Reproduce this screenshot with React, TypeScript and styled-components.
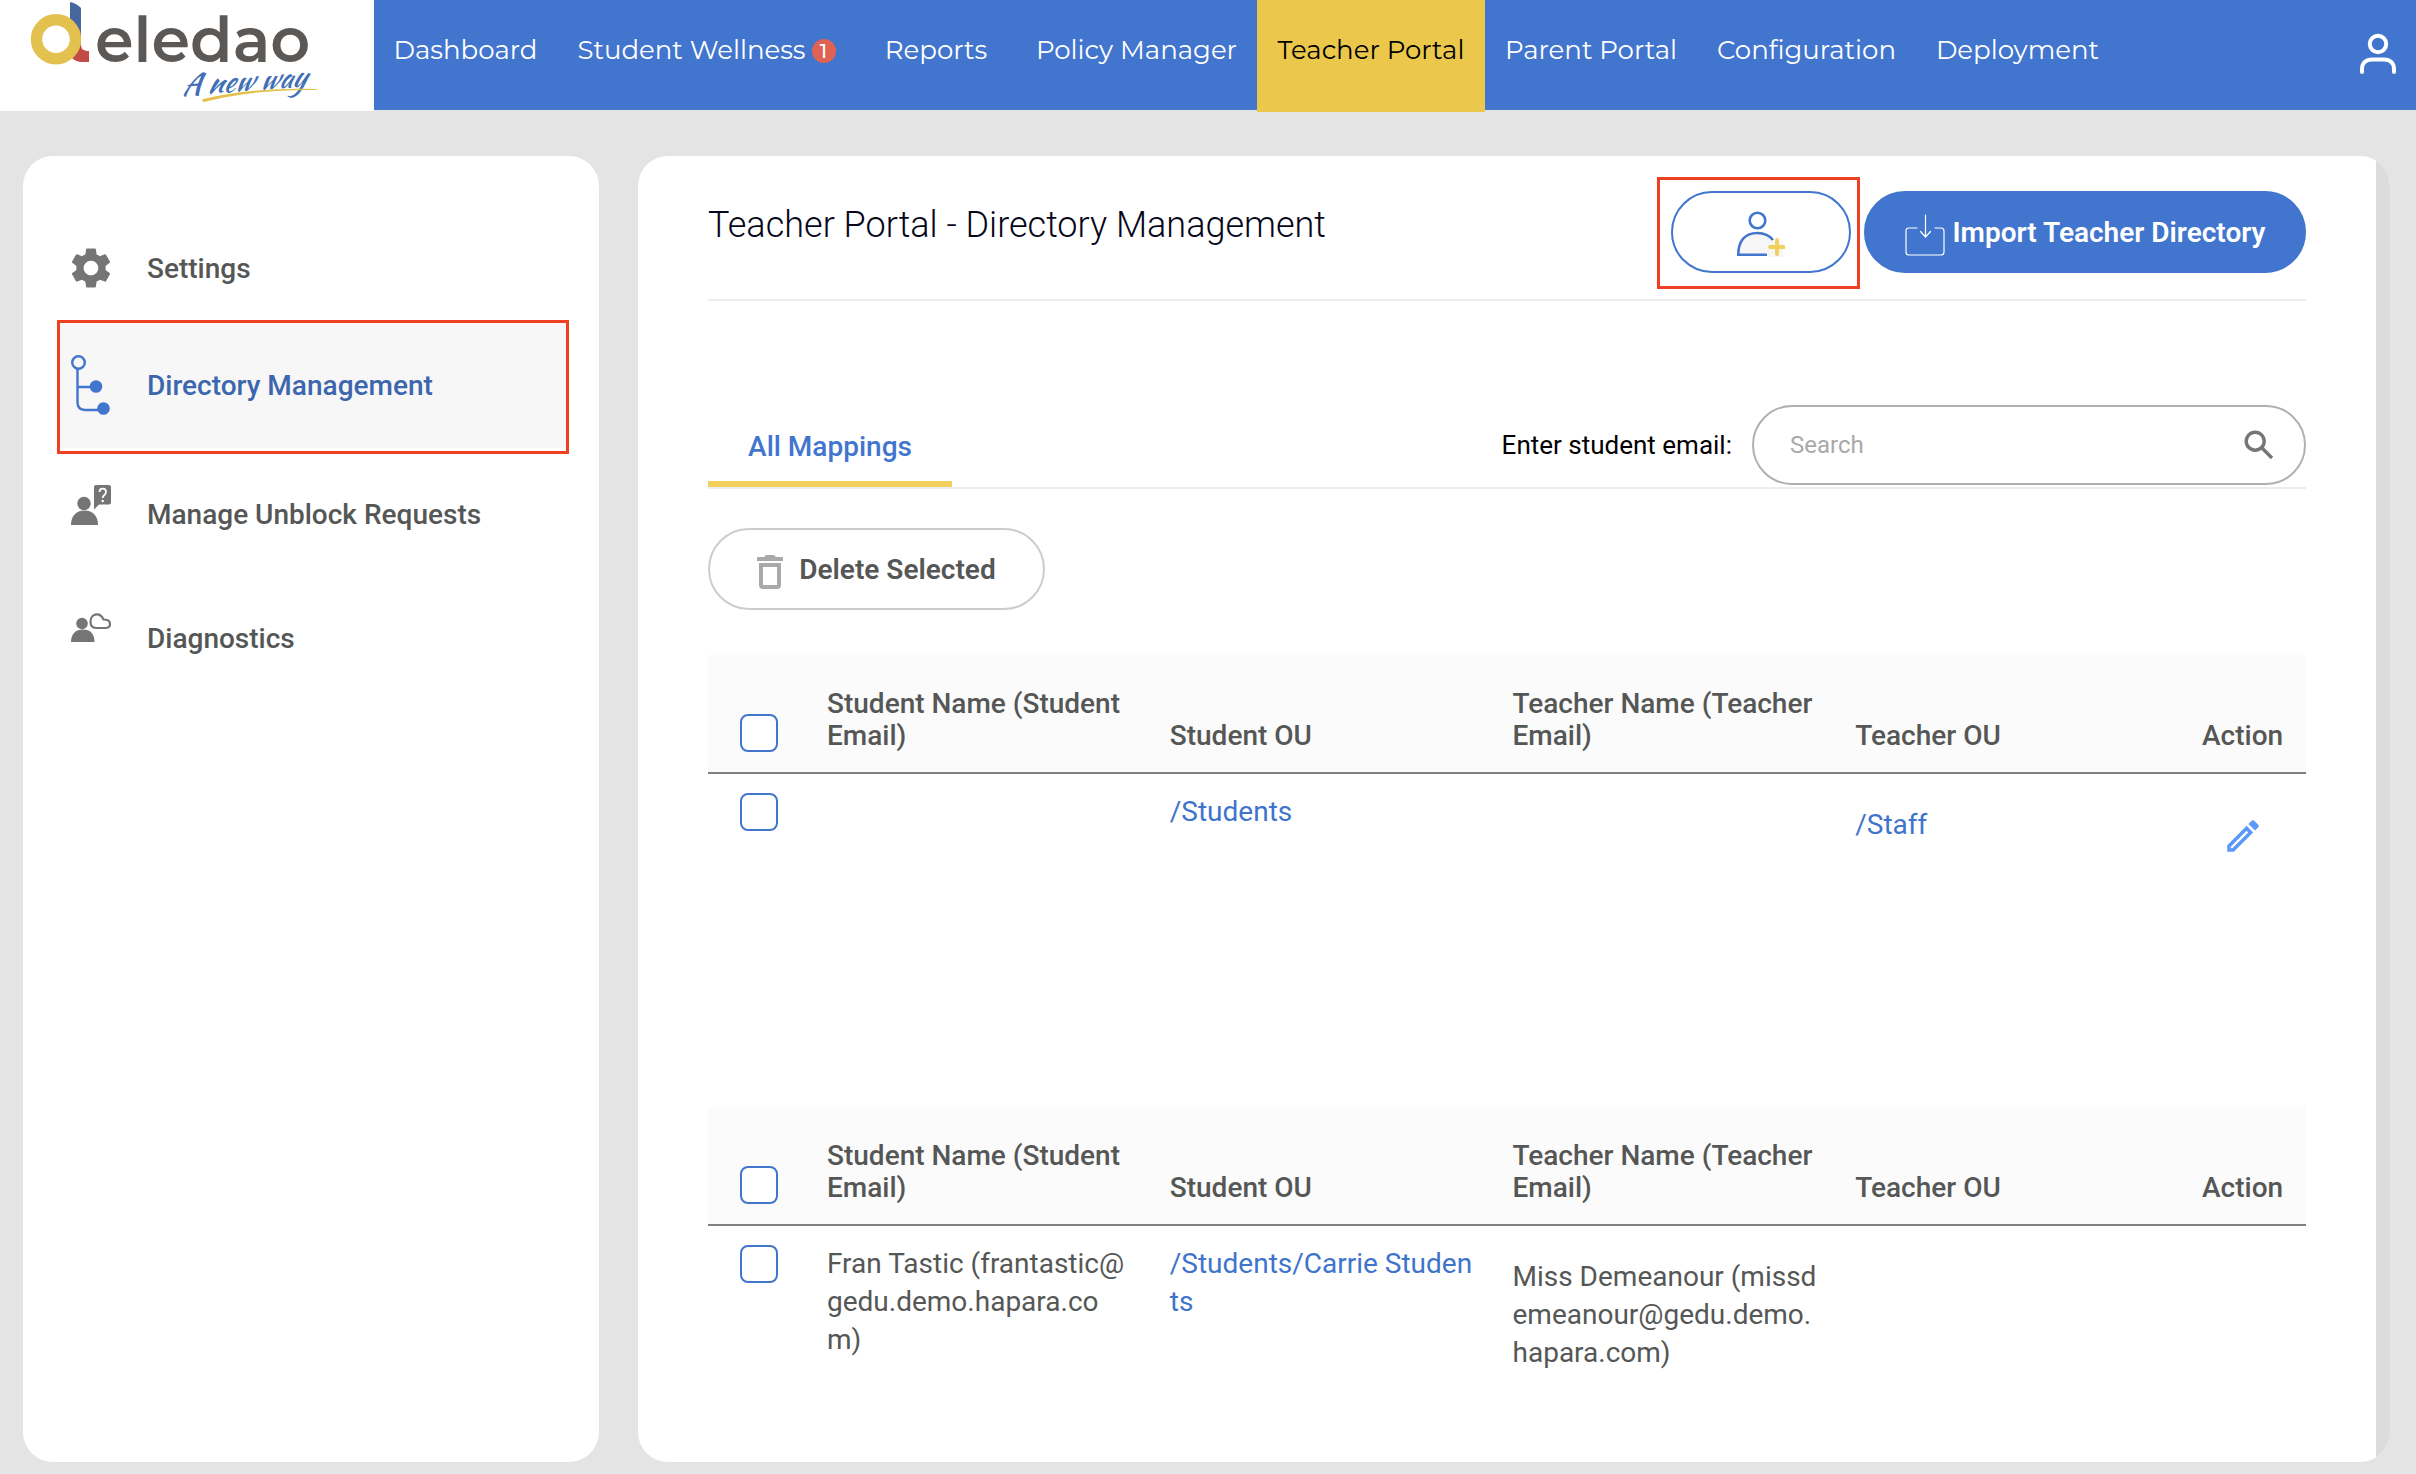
import React from 'react';
import styled, { createGlobalStyle } from 'styled-components';

const color = {
  blue: '#4275cd',
  link: '#3f74cc',
  navy: '#3c66ad',
  yellow: '#ebc74c',
  text: '#555756',
  icon: '#757575',
  rule: '#e9eef2',
  alert: '#ee4023',
  page: '#e4e4e4',
};

const GlobalStyle = createGlobalStyle`
  *, *::before, *::after { box-sizing: border-box; }
  body {
    margin: 0;
    background: ${color.page};
    color: ${color.text};
    font-family: Roboto, "Liberation Sans", sans-serif;
    font-size: 28px;
  }
  button, input { font: inherit; }
`;

const Page = styled.div`
  display: flex;
  flex-direction: column;
  min-height: 100vh;
`;

const TopBar = styled.header`
  display: flex;
  align-items: flex-start;
  height: 111px;
`;

const LogoLink = styled.a`
  flex: none;
  width: 374px;
  height: 111px;
  background: #fff;
`;

const Nav = styled.nav`
  display: flex;
  flex: 1;
  height: 110px;
  background: ${color.blue};
`;

const NavItem = styled.a<{ $width: number; $active?: boolean }>`
  flex: none;
  display: flex;
  justify-content: center;
  gap: 6px;
  width: ${(p) => p.$width}px;
  height: ${(p) => (p.$active ? 112 : 110)}px;
  padding-top: 34px;
  background: ${(p) => (p.$active ? color.yellow : 'transparent')};
  color: ${(p) => (p.$active ? '#000' : '#fff')};
  font-family: Montserrat, Inter, sans-serif;
  font-size: 26px;
  line-height: 32px;
  text-decoration: none;
  white-space: nowrap;
`;

const Badge = styled.span`
  width: 24px;
  height: 24px;
  margin-top: 5px;
  border-radius: 12px;
  background: #e06252;
  font-size: 20px;
  font-weight: 500;
  line-height: 24px;
  text-align: center;
`;

const AccountButton = styled.button`
  margin-left: auto;
  padding: 32px 19px 34px;
  border: 0;
  background: none;
  line-height: 0;
`;

const Body = styled.div`
  display: flex;
  flex: 1;
  gap: 39px;
  padding: 45px 26px 12px 23px;
`;

const Sidebar = styled.aside`
  flex: none;
  width: 576px;
  padding: 58px 32px 0 37px;
  border-radius: 30px;
  background: #fff;
`;

const SideLink = styled.a<{ $height: number; $selected?: boolean }>`
  position: relative;
  display: flex;
  align-items: center;
  gap: 36px;
  height: ${(p) => p.$height}px;
  padding-left: 11px;
  background: ${(p) => (p.$selected ? '#f7f7f7' : 'transparent')};
  color: ${(p) => (p.$selected ? color.navy : color.text)};
  font-weight: 500;
  text-decoration: none;
`;

const Highlight = styled.span<{ $inset: string }>`
  position: absolute;
  inset: ${(p) => p.$inset};
  border: 3px solid ${color.alert};
  pointer-events: none;
`;

const Panel = styled.main`
  display: flex;
  flex: 1;
  min-width: 0;
  overflow: hidden;
  border-radius: 30px;
  background: #fff;
`;

const PanelContent = styled.div`
  flex: 1;
  min-width: 0;
  padding: 35px 70px 40px;
`;

const ScrollTrack = styled.div`
  flex: none;
  width: 14px;
  background: #dcdcdc;
`;

const PanelHead = styled.div`
  display: flex;
  align-items: flex-start;
  gap: 13px;
  padding-bottom: 26px;
  border-bottom: 2px solid ${color.rule};
`;

const Title = styled.h1`
  flex: 1;
  margin: 0;
  color: #06061a;
  font-size: 36px;
  font-weight: 300;
  line-height: 68px;
`;

const AddWrap = styled.div`
  position: relative;
`;

const Pill = styled.button<{ $tone: 'outline' | 'solid' | 'plain' }>`
  display: flex;
  align-items: center;
  justify-content: center;
  gap: ${(p) => (p.$tone === 'plain' ? 16 : 8)}px;
  width: ${(p) => ({ outline: 180, solid: 442, plain: 337 })[p.$tone]}px;
  height: 82px;
  padding: 0;
  border: 2px solid ${(p) => (p.$tone === 'plain' ? '#ccc' : color.blue)};
  border-radius: 41px;
  background: ${(p) => (p.$tone === 'solid' ? color.blue : '#fff')};
  color: ${(p) => (p.$tone === 'solid' ? '#fff' : color.text)};
  font-weight: 600;
  white-space: nowrap;
`;

const TabRow = styled.div`
  display: flex;
  justify-content: space-between;
  height: 84px;
  margin-top: 104px;
  border-bottom: 2px solid ${color.rule};
`;

const Tab = styled.button`
  width: 244px;
  padding: 6px 0 0;
  border: 0;
  border-bottom: 6px solid #f2d05e;
  background: none;
  color: ${color.blue};
  font-weight: 500;
`;

const SearchArea = styled.div`
  display: flex;
  align-items: center;
  gap: 20px;
  height: 80px;
`;

const SearchLabel = styled.label`
  color: #000;
  font-size: 26px;
`;

const SearchField = styled.div`
  display: flex;
  align-items: center;
  width: 554px;
  height: 80px;
  padding: 0 30px 0 36px;
  border: 2px solid #b0b0b0;
  border-radius: 40px;
`;

const SearchInput = styled.input`
  flex: 1;
  min-width: 0;
  padding: 0;
  border: 0;
  outline: 0;
  background: none;
  font-size: 24px;
  &::placeholder { color: #a9a9a9; opacity: 1; }
`;

const Actions = styled.div`
  margin: 39px 0 45px;
`;

const Tables = styled.div`
  display: flex;
  flex-direction: column;
  gap: 164px;
`;

const Table = styled.table`
  width: 100%;
  border-collapse: collapse;
  table-layout: fixed;
`;

const HeadCell = styled.th`
  height: 118px;
  padding: 0 40px 20px 0;
  border-bottom: 2px solid #808080;
  background: #fbfbfb;
  font-weight: 500;
  line-height: 32px;
  text-align: left;
  vertical-align: bottom;
  &:first-child { padding: 0 0 20px 32px; }
  &:last-child { padding-right: 0; padding-left: 4px; }
`;

const Cell = styled.td<{ $top: number; $right?: number }>`
  height: 170px;
  padding: ${(p) => p.$top}px ${(p) => p.$right ?? 40}px 0 0;
  line-height: 38px;
  vertical-align: top;
  word-break: break-all;
  &:first-child { padding: 19px 0 0 32px; }
  &:last-child { padding: 41px 0 0 24px; }
`;

const CellLink = styled.a`
  color: ${color.link};
  text-decoration: none;
`;

const Check = styled.input.attrs({ type: 'checkbox' })`
  display: block;
  appearance: none;
  width: 38px;
  height: 38px;
  margin: 0;
  border: 2px solid ${color.blue};
  border-radius: 8px;
  background: #fff;
`;

const EditButton = styled.button`
  display: block;
  padding: 0;
  border: 0;
  background: none;
  line-height: 0;
`;

const Logo = () => (
  <svg width="374" height="111" viewBox="0 0 374 111" role="img" aria-label="deledao, A new way">
    <path d="M70 2Q76 3 81 8V44H70Z" fill="#46689f" />
    <path d="M81 44C81 49 83 51 89 51V62H82Q76 62 72 58Z" fill="#c24b45" />
    <circle cx="56" cy="39.3" r="19.5" fill="#fff" stroke="#e2c14f" strokeWidth="11.4" />
    <text x="95" y="62" fill="#5c5856" fontFamily="Montserrat, Inter, sans-serif" fontSize="62" fontWeight="600">
      eledao
    </text>
    <text x="182" y="95" fill="#3f70b6" fontFamily="'Kaushan Script', 'Dancing Script', Pacifico, Caveat, Lato, sans-serif" fontSize="29" fontStyle="italic" transform="rotate(-4 182 95)">
      A new way
    </text>
    <path d="M203 99Q252 87 317 89V90Q254 89 204 102Q201 101 203 99Z" fill="#e2c14f" />
  </svg>
);

const AccountIcon = () => (
  <svg width="38" height="42" viewBox="0 0 38 42" fill="none" stroke="#fff" strokeWidth="4" strokeLinecap="round">
    <circle cx="19" cy="11" r="8.2" />
    <path d="M3 39V36C3 30 7 26.500 13 26.500H25C31 26.500 35 30 35 36V39" />
  </svg>
);

const GearIcon = () => (
  <svg width="40" height="60" viewBox="0 0 40 60">
    <path
      transform="translate(-4.500 5.500) scale(2.040)"
      fill={color.icon}
      d="M19.140 12.940c.040-.300.060-.610.060-.940 0-.320-.020-.640-.070-.940l2.030-1.580c.180-.140.230-.410.120-.610l-1.920-3.320c-.120-.220-.370-.290-.590-.220l-2.390.960c-.500-.380-1.030-.700-1.620-.940l-.360-2.540c-.040-.240-.240-.410-.480-.410h-3.840c-.240 0-.430.170-.470.410l-.360 2.540c-.590.240-1.130.570-1.620.940l-2.390-.960c-.220-.080-.470 0-.590.220L2.740 8.870c-.120.210-.080.470.120.610l2.030 1.580c-.050.300-.090.630-.090.940s.020.640.070.940l-2.030 1.580c-.180.140-.230.410-.120.610l1.920 3.320c.120.220.370.290.590.220l2.390-.960c.500.380 1.030.700 1.620.940l.360 2.540c.050.240.240.410.480.410h3.840c.240 0 .440-.170.470-.410l.360-2.540c.590-.240 1.130-.560 1.620-.940l2.390.960c.220.080.470 0 .590-.220l1.920-3.320c.120-.220.070-.470-.120-.610l-2.010-1.580zM12 15.600c-1.980 0-3.600-1.620-3.600-3.600s1.620-3.600 3.600-3.600 3.600 1.620 3.600 3.600-1.620 3.600-3.600 3.600z"
    />
  </svg>
);

const TreeIcon = () => (
  <svg width="40" height="60" viewBox="0 0 40 60" fill="none" stroke={color.blue} strokeWidth="2.400">
    <circle cx="7.500" cy="7.500" r="6.300" />
    <path d="M6.500 14V47Q6.500 55 14 55H30M6.500 32H22" />
    <circle cx="25" cy="31.500" r="6.300" fill={color.blue} stroke="none" />
    <circle cx="32.500" cy="53.500" r="6.300" fill={color.blue} stroke="none" />
  </svg>
);

const RequestIcon = () => (
  <svg width="40" height="60" viewBox="0 0 40 60" fill={color.icon}>
    <circle cx="13" cy="19.500" r="6.700" />
    <path d="M0 41C0 32 5 26.500 13.500 26.500S27 32 27 41Z" />
    <path d="M25 1H38Q40 1 40 3V18.500Q40 20.500 38 20.500H28L23 25.500V3Q23 1 25 1Z" />
    <path d="M28.500 8C28.500 3.500 35 3.500 35 8C35 11 31.700 11 31.700 14" fill="none" stroke="#fff" strokeWidth="1.800" />
    <circle cx="31.700" cy="17" r="1.200" fill="#fff" />
  </svg>
);

const DiagnosticsIcon = () => (
  <svg width="40" height="60" viewBox="0 0 40 60" fill={color.icon}>
    <circle cx="11" cy="15.500" r="5.800" />
    <path d="M0 34C0 26 4.500 21.500 12 21.500S23.500 26 23.500 34Z" />
    <path
      d="M25 20C20.500 20 19.500 16.500 19.500 13.500C19.500 9 22.500 6.300 26 6.300C29.500 6.300 31 8 32.500 11.500C36.500 11.500 39 13 39 16C39 18.500 37 20 34.500 20Z"
      fill="none"
      stroke={color.icon}
      strokeWidth="2.200"
      strokeLinejoin="round"
    />
  </svg>
);

const AddUserIcon = () => (
  <svg width="48" height="52" viewBox="0 -5 48 52">
    <path d="M1.500 43.500C1.500 30 8 21.500 20.500 21.500C29 21.500 34 25 37 31L46 30V46H31V43.500Z" fill="#f6f6f6" />
    <circle cx="20.500" cy="9.500" r="7.800" fill="none" stroke={color.blue} strokeWidth="2.600" />
    <path d="M30 43.800H1.300C1.300 30 8 22 20.500 22C28 22 32.500 24.500 36 29" fill="none" stroke={color.blue} strokeWidth="2.600" />
    <path d="M40 29V43M33 36H47" stroke="#f2d05e" strokeWidth="4" strokeLinecap="round" />
  </svg>
);

const ImportIcon = () => (
  <svg width="40" height="52" viewBox="0 -6 40 52" fill="none" stroke="#fff" strokeWidth="1.200" strokeLinecap="round">
    <path d="M12 16H4Q1 16 1 19V40Q1 43 4 43H36Q39 43 39 40V19Q39 16 36 16H30" />
    <path d="M20.500 3V25M15.500 19.500L20.500 25L25.500 19.500" />
  </svg>
);

const TrashIcon = () => (
  <svg width="26" height="42" viewBox="0 -4 26 42" fill="#a9a9a9">
    <path d="M0 5H7L9 3H17L19 5H26V9H0Z" />
    <path fillRule="evenodd" d="M2 11H24V33Q24 37 20 37H6Q2 37 2 33ZM6 15V33H20V15Z" />
  </svg>
);

const SearchIcon = () => (
  <svg width="30" height="30" viewBox="0 0 30 30" fill="none" stroke="#757575" strokeWidth="3.400">
    <circle cx="11.200" cy="11.200" r="9" />
    <path d="M17.500 17.500L28 28" />
  </svg>
);

const PencilIcon = () => (
  <svg width="42" height="42" viewBox="0 0 24 24" fill="#5b99f8">
    <path d="M14.060 9.020l.920.920L5.920 19H5v-.920l9.060-9.060M17.660 3c-.250 0-.510.100-.700.290l-1.830 1.830 3.750 3.750 1.830-1.830c.390-.390.390-1.020 0-1.410l-2.340-2.340c-.200-.200-.450-.290-.710-.290zm-3.600 3.190L3 17.250V21h3.750L17.810 9.940l-3.750-3.750z" />
  </svg>
);

const navItems = [
  { label: 'Dashboard', width: 183 },
  { label: 'Student Wellness', width: 299, badge: 1 },
  { label: 'Reports', width: 160 },
  { label: 'Policy Manager', width: 241 },
  { label: 'Teacher Portal', width: 228, active: true },
  { label: 'Parent Portal', width: 212 },
  { label: 'Configuration', width: 219 },
  { label: 'Deployment', width: 203 },
];

const sideItems = [
  { label: 'Settings', height: 108, Icon: GearIcon },
  { label: 'Directory Management', height: 126, Icon: TreeIcon, selected: true },
  { label: 'Manage Unblock Requests', height: 132, Icon: RequestIcon },
  { label: 'Diagnostics', height: 116, Icon: DiagnosticsIcon },
];

type Mapping = {
  student: string;
  studentOu: string;
  teacher: string;
  teacherOu: string;
  editable: boolean;
};

const mappings: Mapping[] = [
  { student: '', studentOu: '/Students', teacher: '', teacherOu: '/Staff', editable: true },
  {
    student: 'Fran Tastic (frantastic@gedu.demo.hapara.com)',
    studentOu: '/Students/Carrie Students',
    teacher: 'Miss Demeanour (missdemeanour@gedu.demo.hapara.com)',
    teacherOu: '',
    editable: false,
  },
];

const MappingTable = ({ mapping }: { mapping: Mapping }) => (
  <Table>
    <colgroup>
      <col style={{ width: 119 }} />
      <col />
      <col />
      <col />
      <col />
      <col style={{ width: 108 }} />
    </colgroup>
    <thead>
      <tr>
        <HeadCell><Check aria-label="Select all mappings" /></HeadCell>
        <HeadCell>Student Name (Student Email)</HeadCell>
        <HeadCell>Student OU</HeadCell>
        <HeadCell>Teacher Name (Teacher Email)</HeadCell>
        <HeadCell>Teacher OU</HeadCell>
        <HeadCell>Action</HeadCell>
      </tr>
    </thead>
    <tbody>
      <tr>
        <Cell $top={19}><Check aria-label="Select mapping" /></Cell>
        <Cell $top={19}>{mapping.student}</Cell>
        <Cell $top={19}>{mapping.studentOu && <CellLink href="#student-ou">{mapping.studentOu}</CellLink>}</Cell>
        <Cell $top={32} $right={36}>{mapping.teacher}</Cell>
        <Cell $top={32}>{mapping.teacherOu && <CellLink href="#teacher-ou">{mapping.teacherOu}</CellLink>}</Cell>
        <Cell $top={41}>
          {mapping.editable && <EditButton aria-label="Edit mapping"><PencilIcon /></EditButton>}
        </Cell>
      </tr>
    </tbody>
  </Table>
);

export default function App() {
  return (
    <Page>
      <GlobalStyle />
      <TopBar>
        <LogoLink href="#home"><Logo /></LogoLink>
        <Nav>
          {navItems.map((item) => (
            <NavItem key={item.label} href="#nav" $width={item.width} $active={item.active}>
              {item.label}
              {item.badge && <Badge>{item.badge}</Badge>}
            </NavItem>
          ))}
          <AccountButton aria-label="Account"><AccountIcon /></AccountButton>
        </Nav>
      </TopBar>
      <Body>
        <Sidebar>
          {sideItems.map(({ label, height, Icon, selected }) => (
            <SideLink key={label} href="#section" $height={height} $selected={selected}>
              <Icon />
              {label}
              {selected && <Highlight $inset="-2px -2px -6px -3px" />}
            </SideLink>
          ))}
        </Sidebar>
        <Panel>
          <PanelContent>
            <PanelHead>
              <Title>Teacher Portal - Directory Management</Title>
              <AddWrap>
                <Pill $tone="outline" aria-label="Add mapping"><AddUserIcon /></Pill>
                <Highlight $inset="-14px -9px -16px -14px" />
              </AddWrap>
              <Pill $tone="solid"><ImportIcon />Import Teacher Directory</Pill>
            </PanelHead>
            <TabRow>
              <Tab>All Mappings</Tab>
              <SearchArea>
                <SearchLabel htmlFor="student-email">Enter student email:</SearchLabel>
                <SearchField>
                  <SearchInput id="student-email" placeholder="Search" />
                  <SearchIcon />
                </SearchField>
              </SearchArea>
            </TabRow>
            <Actions>
              <Pill $tone="plain"><TrashIcon />Delete Selected</Pill>
            </Actions>
            <Tables>
              {mappings.map((mapping) => (
                <MappingTable key={mapping.studentOu} mapping={mapping} />
              ))}
            </Tables>
          </PanelContent>
          <ScrollTrack />
        </Panel>
      </Body>
    </Page>
  );
}
